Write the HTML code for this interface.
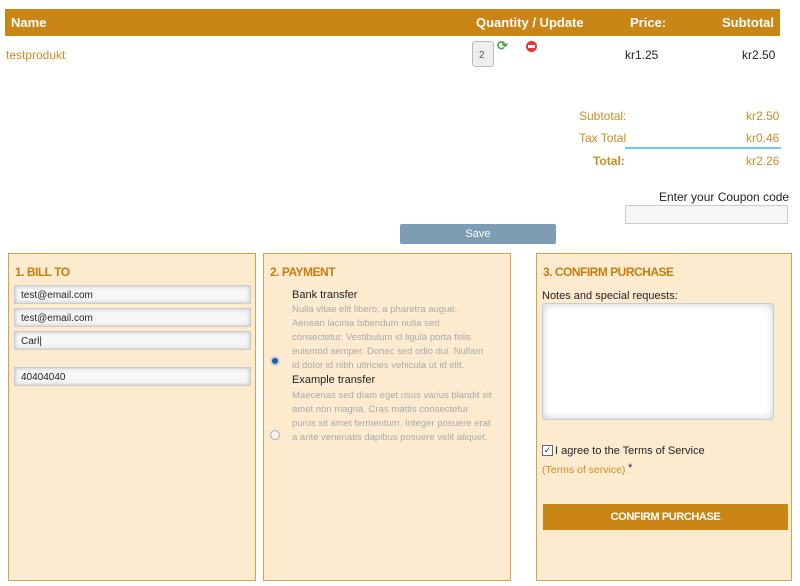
<!DOCTYPE html>
<html><head><style>
*{margin:0;padding:0;box-sizing:border-box}
body{width:800px;height:586px;background:#fff;font-family:"Liberation Sans",sans-serif;position:relative;overflow:hidden;font-size:12px;color:#222}
.a{position:absolute;white-space:nowrap}
.hdr{position:absolute;left:5px;top:9px;width:775px;height:27px;background:#c98516;color:#fff;font-weight:bold;font-size:13px}
.or{color:#d08a24}
.panel{position:absolute;top:253px;height:328px;background:#fdebd0;border:1px solid #e0a04a}
.ph{position:absolute;left:6px;top:11px;color:#c77c10;font-weight:bold;font-size:12px;letter-spacing:-0.5px}
.inp{position:absolute;left:5px;width:237px;height:19px;background:#f7f7f7;border:1px solid #ccc;box-shadow:inset 0 0 4px #bbb;font-size:10px;padding:4px 6px;color:#222}
.lorem{color:#aaa;font-size:9.5px;line-height:14px}
</style></head><body>
<div class="hdr"><span class="a" style="left:6px;top:6px">Name</span><span class="a" style="left:471px;top:6px">Quantity / Update</span><span class="a" style="left:625px;top:6px">Price:</span><span class="a" style="left:717px;top:6px">Subtotal</span></div>
<span class="a or" style="left:6px;top:48px;font-size:12px">testprodukt</span>
<div class="a" style="left:472px;top:41px;width:22px;height:26px;border:1px solid #bbb;border-radius:3px;background:#eee;font-size:10px;padding:8px 0 0 6px;color:#555">2</div>
<span class="a" style="left:497px;top:38px;color:#4a4;font-size:13px;font-weight:bold">⟳</span>
<div class="a" style="left:526px;top:41px;width:11px;height:11px;border-radius:50%;background:#e33"><div style="margin:4px 2px;height:3px;background:#fff"></div></div>
<span class="a" style="left:625px;top:48px">kr1.25</span>
<span class="a" style="left:742px;top:48px">kr2.50</span>
<span class="a or" style="left:579px;top:109px">Subtotal:</span><span class="a or" style="left:746px;top:109px">kr2.50</span>
<span class="a or" style="left:579px;top:131px">Tax Total</span><span class="a or" style="left:746px;top:131px">kr0.46</span>
<div class="a" style="left:625px;top:147px;width:156px;height:2px;background:#6cc7ef"></div>
<span class="a or" style="left:593px;top:154px;font-weight:bold">Total:</span><span class="a or" style="left:746px;top:154px">kr2.26</span>
<span class="a" style="left:659px;top:190px">Enter your Coupon code</span>
<div class="a" style="left:625px;top:205px;width:163px;height:19px;border:1px solid #ccc;background:#f6f6f6"></div>
<div class="a" style="left:400px;top:224px;width:156px;height:20px;background:#7d9db5;border-radius:2px;color:#fff;font-size:11px;text-align:center;line-height:20px">Save</div>

<div class="panel" style="left:8px;width:248px">
<div class="ph">1. BILL TO</div>
<div class="inp" style="top:31px">test@email.com</div>
<div class="inp" style="top:54px">test@email.com</div>
<div class="inp" style="top:77px">Carl|</div>
<div class="inp" style="top:113px">40404040</div>
</div>
<div class="panel" style="left:263px;width:248px">
<div class="ph">2. PAYMENT</div>
<span class="a" style="left:28px;top:35px;font-size:11px">Bank transfer</span>
<div class="a lorem" style="left:28px;top:49px;white-space:normal;width:200px">Nulla vitae elit libero, a pharetra augue. Aenean lacinia bibendum nulla sed consectetur. Vestibulum id ligula porta felis euismod semper. Donec sed odio dui. Nullam id dolor id nibh ultricies vehicula ut id elit.</div>
<div class="a" style="left:6px;top:102px;width:10px;height:10px;border-radius:50%;background:#1a5fa0;border:2px solid #ccd"></div>
<span class="a" style="left:28px;top:120px;font-size:11px">Example transfer</span>
<div class="a lorem" style="left:28px;top:135px;white-space:normal;width:200px">Maecenas sed diam eget risus varius blandit sit amet non magna. Cras mattis consectetur purus sit amet fermentum. Integer posuere erat a ante venenatis dapibus posuere velit aliquet.</div>
<div class="a" style="left:6px;top:176px;width:10px;height:10px;border-radius:50%;background:#f4f4f4;border:1px solid #aaa"></div>
</div>
<div class="panel" style="left:536px;width:256px">
<div class="ph">3. CONFIRM PURCHASE</div>
<span class="a" style="left:5px;top:36px;font-size:11px">Notes and special requests:</span>
<div class="a" style="left:5px;top:49px;width:232px;height:117px;background:#fff;border:1px solid #ccc;border-radius:3px;box-shadow:inset 0 0 8px #ccc"></div>
<div class="a" style="left:5px;top:191px;width:11px;height:11px;border:1px solid #667;background:#fff;color:#225;font-size:9px;line-height:9px;text-align:center">✓</div>
<span class="a" style="left:18px;top:191px;font-size:11px">I agree to the Terms of Service</span>
<span class="a or" style="left:5px;top:210px;font-size:10.5px">(Terms of service)</span><span class="a" style="left:91px;top:208px;font-size:11px">*</span>
<div class="a" style="left:6px;top:250px;width:245px;height:26px;background:#c98516;color:#fff;font-weight:bold;font-size:11px;text-align:center;line-height:26px;letter-spacing:-0.4px">CONFIRM PURCHASE</div>
</div>
</body></html>
